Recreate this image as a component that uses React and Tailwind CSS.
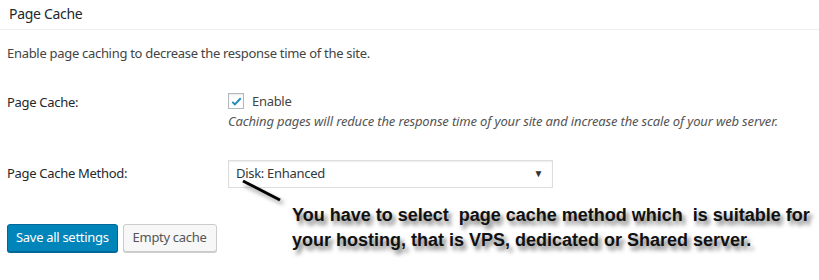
import React from 'react';

const ui = { fontFamily: '"Noto Sans", "Open Sans", sans-serif' };
const note = { fontFamily: '"Liberation Sans", Arial, sans-serif' };

export default function App() {
  return (
    <div className="relative w-[819px] h-[280px] bg-white text-[#23282d] overflow-hidden tracking-[-0.3px]" style={ui}>
      <div className="h-[30px] pl-[9px] pt-[3px] border-b border-[#eee] text-[14px]">Page Cache</div>

      <p className="pl-[7px] mt-[14px] text-[13px] text-[#444]">Enable page caching to decrease the response time of the site.</p>

      <div className="flex mt-[28px]">
        <div className="w-[228px] shrink-0 pl-[7px] pt-[1px] text-[13px] text-[#23282d]">Page Cache:</div>
        <div className="flex flex-col">
          <label className="flex items-center gap-[8px] text-[13px] text-[#444]">
            <span className="w-[16px] h-[16px] border border-[#b4b9be] bg-white flex items-center justify-center shadow-[inset_0_1px_2px_rgba(0,0,0,0.1)]">
              <svg width="13" height="13" viewBox="0 0 20 20">
                <path d="M3.5 10.5l4 4 9-9.5" fill="none" stroke="#1e8cbe" strokeWidth="3" />
              </svg>
            </span>
            Enable
          </label>
          <p className="mt-[1px] text-[13px] italic text-[#555] tracking-[-0.15px]">Caching pages will reduce the response time of your site and increase the scale of your web server.</p>
        </div>
      </div>

      <div className="flex items-center mt-[28px]">
        <div className="w-[228px] shrink-0 pl-[7px] text-[13px]">Page Cache Method:</div>
        <div className="w-[325px] h-[28px] border border-[#ddd] shadow-[inset_0_1px_2px_rgba(0,0,0,0.07)] flex items-center justify-between pl-[7px] pr-[9px] text-[13px] text-[#32373c]">
          <span>Disk: Enhanced</span>
          <span className="text-[10px] text-[#333]">▼</span>
        </div>
      </div>

      <div className="flex gap-[5px] mt-[36px] pl-[7px]">
        <button className="h-[28px] px-[8px] bg-[#0085ba] border border-[#006799] rounded-[3px] text-white text-[13px] shadow-[0_1px_0_#006799]">Save all settings</button>
        <button className="h-[28px] px-[9px] bg-[#f7f7f7] border border-[#ccc] rounded-[3px] text-[#555] text-[13px] shadow-[0_1px_0_#ccc]">Empty cache</button>
      </div>

      <svg className="absolute left-0 top-0 pointer-events-none" width="819" height="280">
        <defs>
          <filter id="sh" x="-20%" y="-50%" width="140%" height="200%">
            <feGaussianBlur stdDeviation="2" />
          </filter>
        </defs>
        <line x1="245" y1="185" x2="283" y2="203" stroke="#999" strokeWidth="3" filter="url(#sh)" />
        <line x1="243" y1="181" x2="280" y2="200" stroke="#000" strokeWidth="3" />
      </svg>

      <div
        className="absolute left-[292px] top-[203px] text-[18px] leading-[25px] font-bold text-[#111] whitespace-pre tracking-normal"
        style={{ ...note, textShadow: '3px 4px 4px rgba(0,0,0,0.55)' }}
      >
        {'You have to select  page cache method which  is suitable for\nyour hosting, that is VPS, dedicated or Shared server.'}
      </div>
    </div>
  );
}
